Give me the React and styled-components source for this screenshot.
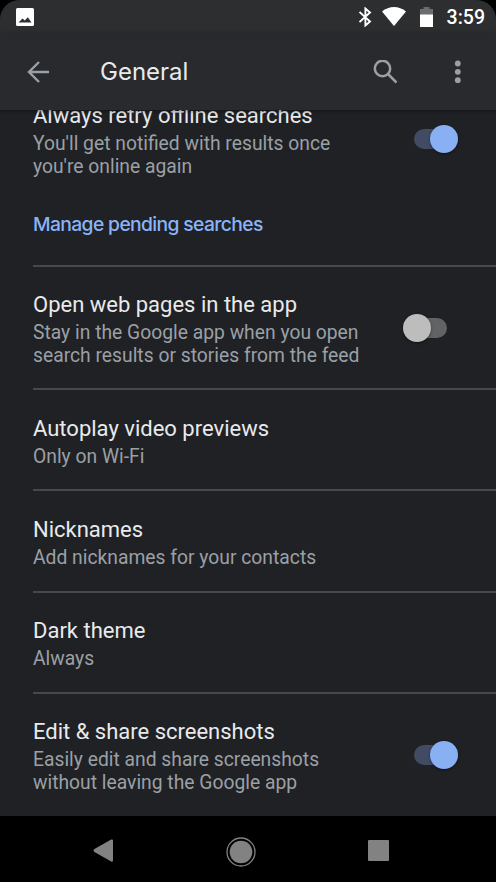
import { useState } from 'react'
import styled, { createGlobalStyle } from 'styled-components'

const settings = [
    { id: 'webpages', title: 'Open web pages in the app', summary: ['Stay in the Google app when you open', 'search results or stories from the feed'], toggle: false },
    { id: 'autoplay', title: 'Autoplay video previews', summary: ['Only on Wi-Fi'] },
    { id: 'nicknames', title: 'Nicknames', summary: ['Add nicknames for your contacts'] },
    { id: 'theme', title: 'Dark theme', summary: ['Always'] },
    { id: 'screenshots', title: 'Edit & share screenshots', summary: ['Easily edit and share screenshots', 'without leaving the Google app'], toggle: true },
];

function Setting({ title, summary, toggle, first }) {
    const [on, setOn] = useState(toggle);

    return (
        <Row $first={first}>
            <Labels>
                <Title>{title}</Title>
                {summary.map((line) => <Summary key={line}>{line}</Summary>)}
            </Labels>
            {toggle !== undefined && (
                <Switch role="switch" aria-checked={on} aria-label={title} onClick={() => setOn(!on)} $on={on}>
                    <Thumb $on={on} />
                </Switch>
            )}
        </Row>
    )
}

export default function App() {
    return (
        <Phone>
            <GlobalStyle />
            <Screen>
                <StatusBar>
                    <svg width="18" height="18" viewBox="0 0 18 18">
                        <path fill="#fff" fillRule="evenodd" d="M1.5 0h15A1.5 1.5 0 0 1 18 1.5v15a1.5 1.5 0 0 1-1.5 1.5h-15A1.5 1.5 0 0 1 0 16.5v-15A1.5 1.5 0 0 1 1.5 0zM2.500 14.500h13l-3.700-5.200-3 3.200-2.300-2z" />
                    </svg>
                    <StatusIcons>
                        <svg width="13" height="20" viewBox="0 0 13 20" fill="none" stroke="#fff" strokeWidth="1.9">
                            <path d="M.5 5l10.500 9.500-4.600 4V1.500L11 5.500.5 15" />
                        </svg>
                        <svg width="24" height="19" viewBox="0 0 24 19" fill="#fff">
                            <path d="M0 4.500C7-1.500 17-1.500 24 4.500L12 19z" />
                        </svg>
                        <Battery width="13" height="20" viewBox="0 0 13 20">
                            <path fill="#6c6d6e" d="M0 2h3.500V0h6v2H13v6H0z" />
                            <path fill="#fff" d="M0 7.500h13V20H0z" />
                        </Battery>
                    </StatusIcons>
                    <Clock>3:59</Clock>
                </StatusBar>
                <AppBar>
                    <IconButton aria-label="Back">
                        <svg width="22" height="22" viewBox="0 0 22 22" fill="none" stroke="#9aa0a6" strokeWidth="2.4">
                            <path d="M22 11H2M12 1L2 11l10 10" />
                        </svg>
                    </IconButton>
                    <Heading>General</Heading>
                    <IconButton aria-label="Search">
                        <svg width="24" height="24" viewBox="0 0 24 24" fill="none" stroke="#9aa0a6" strokeWidth="2.5">
                            <circle cx="9.5" cy="8.5" r="7.7" />
                            <path d="M15 14l8.500 8.500" />
                        </svg>
                    </IconButton>
                    <IconButton aria-label="More options">
                        <svg width="7" height="24" viewBox="0 0 7 24" fill="#9aa0a6">
                            <circle cx="3.8" cy="3.5" r="2.9" />
                            <circle cx="3.8" cy="11.8" r="2.9" />
                            <circle cx="3.8" cy="20.2" r="2.9" />
                        </svg>
                    </IconButton>
                </AppBar>
                <List>
                    <Setting first title="Always retry offline searches" summary={["You'll get notified with results once", "you're online again"]} toggle={true} />
                    <ManageLink>Manage pending searches</ManageLink>
                    {settings.map((setting) => <Setting key={setting.id} {...setting} />)}
                </List>
            </Screen>
            <NavBar>
                <svg width="20" height="23" viewBox="0 0 20 23" fill="#828282">
                    <path d="M18.200.500Q20 0 20 1.500v20Q20 23 18.200 22.500L1 12.700Q0 11.500 1 10.300z" />
                </svg>
                <HomeIcon width="30" height="30" viewBox="0 0 30 30" fill="#828282">
                    <circle cx="15" cy="15" r="14" fill="none" stroke="#828282" strokeWidth="1.3" />
                    <circle cx="15" cy="15" r="11.3" />
                </HomeIcon>
                <svg width="21" height="21" viewBox="0 0 21 21" fill="#828282">
                    <rect width="21" height="21" rx="1" />
                </svg>
            </NavBar>
        </Phone>
    )
}

const GlobalStyle = createGlobalStyle`
    * {
        box-sizing: border-box;
    }
    body {
        margin: 0;
        background: #000;
        font-family: Roboto, "Liberation Sans", sans-serif;
    }
    svg {
        display: block;
        flex: none;
    }
    button {
        appearance: none;
        border: none;
        padding: 0;
        background: none;
        cursor: pointer;
    }
`

const Phone = styled.div`
    display: flex;
    flex-direction: column;
    width: 496px;
    height: 882px;
    overflow: hidden;
    background: #000;
`

const Screen = styled.div`
    display: flex;
    flex-direction: column;
    height: 816px;
    border-radius: 20px 20px 0 0;
    overflow: hidden;
    background: #202124;
`

const StatusBar = styled.div`
    display: flex;
    align-items: center;
    flex: none;
    height: 33px;
    padding: 0 11px 0 16px;
    background: #2d2e30;
`

const StatusIcons = styled.div`
    display: flex;
    align-items: center;
    margin-left: auto;
    gap: 10px;
`

const Battery = styled.svg`
    margin-left: 4px;
`

const Clock = styled.div`
    margin-left: 14px;
    padding-top: 2px;
    color: #fff;
    font-size: 19.5px;
    font-weight: 500;
`

const AppBar = styled.header`
    display: flex;
    align-items: center;
    flex: none;
    height: 77px;
    padding: 0 15px 0 14px;
    background: #292a2d;
    box-shadow: 0 1px 4px rgba(0, 0, 0, 0.5);
    z-index: 1;
`

const IconButton = styled.button`
    display: flex;
    align-items: center;
    justify-content: center;
    width: 48px;
    height: 48px;
    & + & {
        margin-left: 24px;
    }
`

const Heading = styled.h1`
    flex: 1;
    margin: 0 0 0 38px;
    color: #e8eaed;
    font-family: Inter, Roboto, sans-serif;
    font-size: 24px;
    font-weight: 400;
`

const List = styled.main`
    flex: 1;
    min-height: 0;
    overflow: hidden;
    padding-left: 33px;
`

const Row = styled.section`
    display: flex;
    align-items: center;
    justify-content: space-between;
    margin-top: ${props => props.$first ? '-34px' : '0'};
    padding: ${props => props.$first ? '24px 37px 21.6px 0' : '24.35px 37px 21.25px 0'};
    border-top: 2px solid #47484b;
`

const Labels = styled.div`
    display: flex;
    flex-direction: column;
`

const Title = styled.div`
    color: #e8eaed;
    font-size: 22px;
    line-height: 28px;
    margin-bottom: 3px;
    white-space: nowrap;
`

const Summary = styled.div`
    color: #9aa0a6;
    font-size: 19.3px;
    line-height: 22.5px;
    white-space: nowrap;
`

const ManageLink = styled.a`
    display: block;
    height: 65.2px;
    padding-top: 11px;
    color: #8ab4f8;
    font-family: Inter, Roboto, sans-serif;
    font-size: 19.3px;
    font-weight: 500;
    letter-spacing: -0.63px;
    line-height: 26px;
`

const Switch = styled.button`
    display: flex;
    align-items: center;
    justify-content: ${props => props.$on ? 'flex-end' : 'flex-start'};
    width: 33px;
    height: 20px;
    margin: 0 12px 3px 0;
    border-radius: 10px;
    background: ${props => props.$on ? '#414c64' : '#626365'};
`

const Thumb = styled.span`
    flex: none;
    width: 28px;
    height: 28px;
    margin: ${props => props.$on ? '0 -11px 0 0' : '0 0 0 -11px'};
    border-radius: 50%;
    background: ${props => props.$on ? '#8ab0f4' : '#bdbdbd'};
    box-shadow: 0 1px 3px rgba(0, 0, 0, 0.45);
`

const NavBar = styled.nav`
    display: flex;
    align-items: center;
    justify-content: space-between;
    height: 66px;
    padding: 3px 107px 0 93px;
    background: #000;
`

const HomeIcon = styled.svg`
    margin: 2px 0 0 1px;
`
